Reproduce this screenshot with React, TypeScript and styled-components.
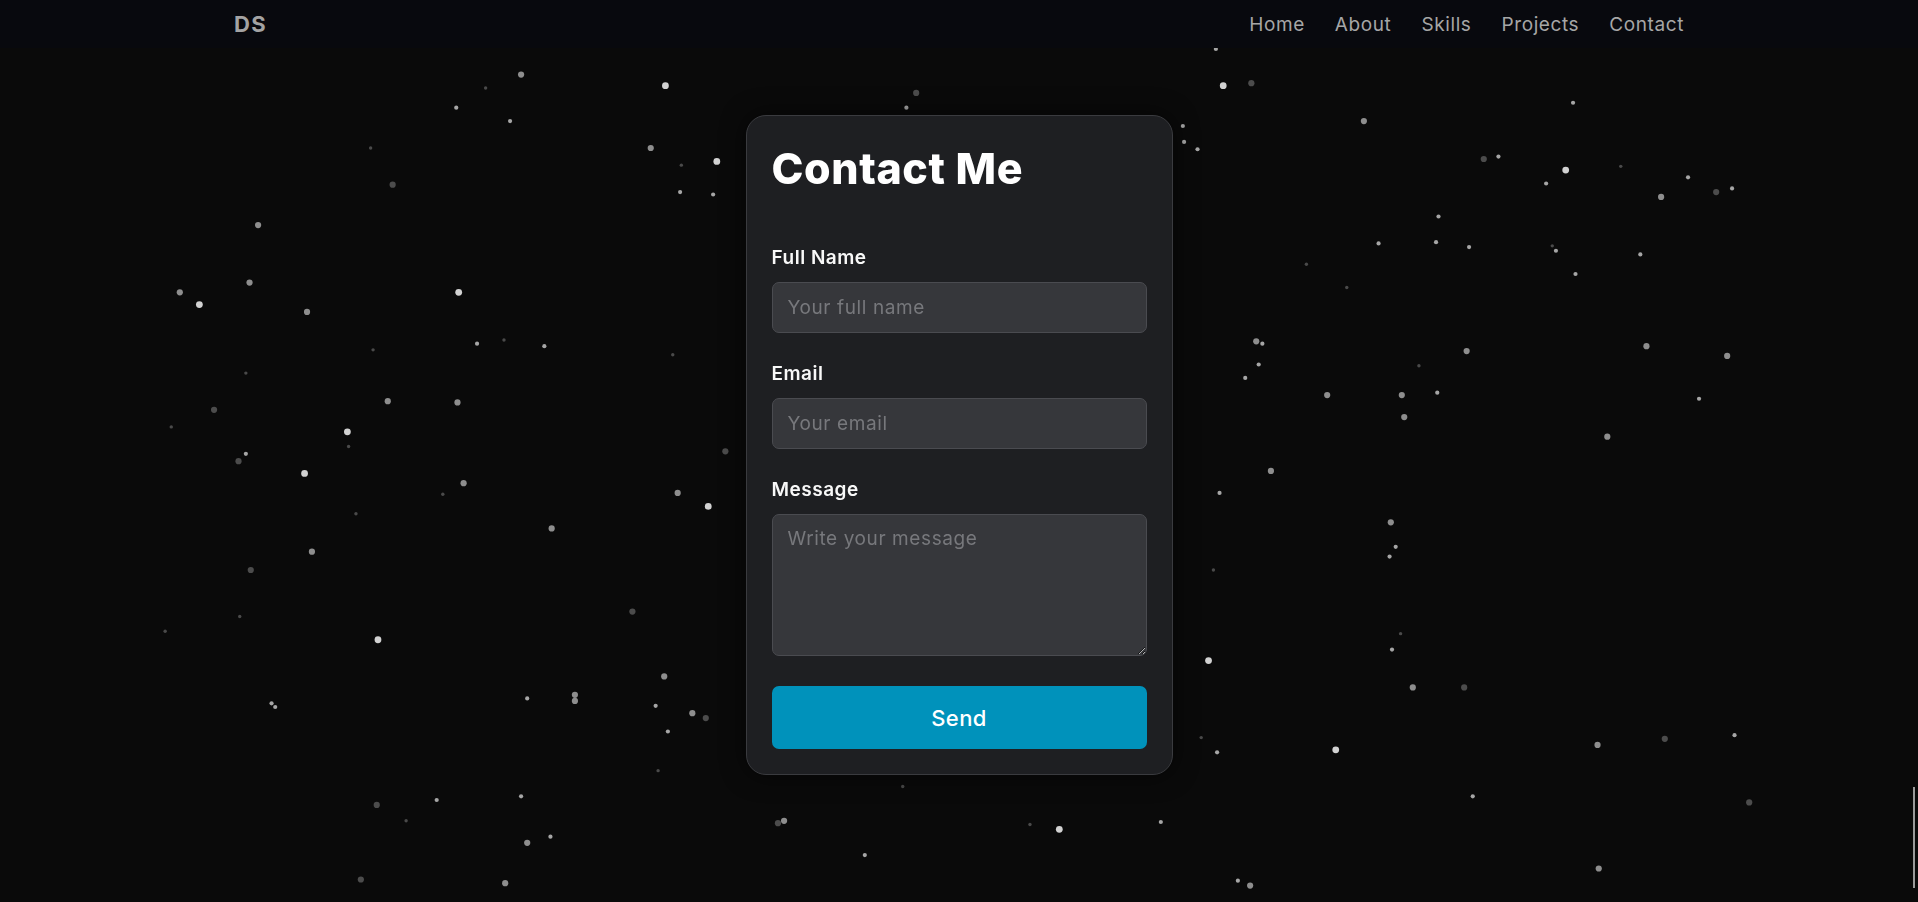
import React from "react";
import styled, { createGlobalStyle } from "styled-components";

const GlobalStyle = createGlobalStyle`
  * { box-sizing: border-box; }
  html, body { margin: 0; padding: 0; background: #0a0a0a; }
  body {
    font-family: "Inter", "Noto Sans", "Liberation Sans", sans-serif;
    color: #f5f5f5;
    overflow: hidden;
  }
`;

type StarKind = "b" | "m" | "d" | "s" | "t";
const STARS: [number, number, StarKind][] = [
  [426, 61, "m"], [544, 70, "b"], [397, 72, "t"], [373, 88, "s"], [417, 99, "s"], [303, 121, "t"],
  [321, 151, "d"], [532, 121, "m"], [557, 135, "t"], [586, 132, "b"], [556, 157, "s"], [583, 159, "s"],
  [211, 184, "m"], [147, 239, "m"], [163, 249, "b"], [204, 231, "m"], [375, 239, "b"], [251, 255, "m"],
  [390, 281, "s"], [412, 278, "t"], [445, 283, "s"], [305, 286, "t"], [550, 290, "t"], [201, 305, "t"],
  [175, 335, "d"], [317, 328, "m"], [374, 329, "m"], [140, 349, "t"], [284, 353, "b"], [285, 365, "t"],
  [201, 371, "s"], [195, 377, "d"], [249, 387, "b"], [379, 395, "m"], [362, 404, "t"], [593, 369, "d"],
  [554, 403, "m"], [579, 414, "b"], [291, 420, "t"], [451, 432, "m"], [255, 451, "m"], [205, 466, "d"],
  [517, 500, "d"], [196, 504, "t"], [135, 516, "t"], [309, 523, "b"], [543, 553, "m"], [470, 568, "m"],
  [470, 573, "m"], [431, 571, "s"], [536, 577, "s"], [222, 575, "s"], [225, 578, "s"], [566, 583, "m"],
  [577, 587, "d"], [546, 598, "s"], [538, 630, "t"], [426, 651, "s"], [357, 654, "s"], [308, 658, "d"],
  [332, 671, "t"], [738, 643, "t"], [641, 671, "m"], [636, 673, "d"], [450, 684, "s"], [431, 689, "m"],
  [707, 699, "s"], [295, 719, "d"], [413, 722, "m"],
  [749, 76, "d"], [741, 88, "s"], [994, 40, "s"], [1000, 70, "b"], [1023, 68, "d"], [1115, 99, "m"],
  [1286, 84, "s"], [967, 103, "s"], [968, 116, "s"], [979, 122, "s"], [1213, 130, "d"], [1225, 128, "s"],
  [1280, 139, "b"], [1325, 136, "t"], [1264, 150, "s"], [1358, 161, "m"], [1380, 145, "s"], [1403, 157, "d"],
  [1416, 154, "s"], [1176, 177, "s"], [1127, 199, "s"], [1174, 198, "s"], [1201, 202, "s"], [1269, 201, "t"],
  [1272, 205, "s"], [1341, 208, "s"], [1068, 216, "t"], [1288, 224, "s"], [1101, 235, "t"], [1027, 279, "m"],
  [1032, 281, "s"], [1199, 287, "m"], [1346, 283, "m"], [1412, 291, "m"], [1029, 298, "s"], [1160, 299, "t"],
  [1018, 309, "s"], [1085, 323, "m"], [1146, 323, "m"], [1175, 321, "s"], [1389, 326, "s"], [1148, 341, "m"],
  [1314, 357, "m"], [1039, 385, "m"], [997, 403, "s"], [1137, 427, "m"], [1141, 447, "s"], [1136, 455, "s"],
  [992, 466, "t"], [1145, 518, "t"], [1138, 531, "s"], [988, 540, "b"], [1155, 562, "m"], [1197, 562, "d"],
  [982, 603, "t"], [995, 615, "s"], [1092, 613, "b"], [1306, 609, "m"], [1361, 604, "d"], [1418, 601, "s"],
  [1204, 651, "s"], [1430, 656, "d"], [949, 672, "s"], [866, 678, "b"], [842, 674, "t"], [1012, 720, "s"],
  [1022, 724, "m"], [1307, 710, "m"],
];

const STAR_STYLE: Record<StarKind, { r: number; fill: string }> = {
  b: { r: 3.4, fill: "#d2d2d2" },
  m: { r: 3.1, fill: "#8e8e8e" },
  d: { r: 3.1, fill: "#4c4c4c" },
  s: { r: 2.1, fill: "#a6a6a6" },
  t: { r: 1.7, fill: "#4a4a4a" },
};

const SCALE = 1918 / 1568;

const StarField = styled.svg`
  position: fixed;
  inset: 0;
  width: 100vw;
  height: 100vh;
  z-index: 0;
  pointer-events: none;
`;

const Page = styled.div`
  position: relative;
  min-height: 100vh;
`;

const NavBar = styled.header`
  position: fixed;
  top: 0;
  left: 0;
  right: 0;
  height: 48px;
  background: #08090e;
  z-index: 10;
`;

const NavInner = styled.nav`
  max-width: 1450px;
  height: 100%;
  margin: 0 auto;
  display: flex;
  align-items: center;
  justify-content: space-between;
`;

const Logo = styled.div`
  font-size: 22px;
  font-weight: 700;
  color: #a3a3a3;
  letter-spacing: 1.4px;
`;

const NavLinks = styled.ul`
  list-style: none;
  margin: 0;
  padding: 0;
  display: flex;
  gap: 30px;
`;

const NavLink = styled.li`
  font-size: 19px;
  font-weight: 400;
  color: #a6a6a6;
  letter-spacing: 0.6px;
`;

const Main = styled.main`
  position: relative;
  z-index: 1;
  display: flex;
  justify-content: center;
  padding-top: 115px;
`;

const Card = styled.section`
  width: 427px;
  background: #1e1f22;
  border: 1px solid #3a3b3f;
  border-radius: 20px;
  padding: 26px 25px 25px;
  display: flex;
  flex-direction: column;
  box-shadow: 0 0 24px rgba(0, 0, 0, 0.6);
`;

const Title = styled.h2`
  margin: 0 0 53px;
  font-size: 43px;
  line-height: 52px;
  font-weight: 800;
  color: #ffffff;
  letter-spacing: 0.6px;
`;

const Form = styled.form`
  display: flex;
  flex-direction: column;
  gap: 30px;
`;

const Field = styled.div`
  display: flex;
  flex-direction: column;
  gap: 13px;
`;

const Label = styled.label`
  font-size: 19px;
  line-height: 22px;
  font-weight: 600;
  color: #f8f8f8;
  letter-spacing: 0.5px;
`;

const inputBase = `
  width: 100%;
  background: #36373b;
  border: 1px solid #4a4b50;
  border-radius: 7px;
  color: #f0f0f0;
  font-family: "Inter", "Noto Sans", "Liberation Sans", sans-serif;
  font-size: 19px;
  letter-spacing: 0.6px;
  padding: 0 15px;
  outline: none;
  &::placeholder { color: #77787c; }
`;

const Input = styled.input`
  ${inputBase}
  height: 51px;
`;

const TextArea = styled.textarea`
  ${inputBase}
  height: 142px;
  padding-top: 11px;
  line-height: 26px;
  resize: vertical;
  display: block;
`;

const SendButton = styled.button`
  height: 63px;
  border: none;
  border-radius: 7px;
  background: #0092bb;
  color: #ffffff;
  font-family: "Inter", "Noto Sans", "Liberation Sans", sans-serif;
  font-size: 22px;
  font-weight: 500;
  letter-spacing: 0.4px;
  cursor: pointer;
`;

const ScrollThumb = styled.div`
  position: fixed;
  right: 3px;
  top: 787px;
  width: 2px;
  height: 101px;
  background: #9a9a9a;
  z-index: 20;
`;

export default function App() {
  return (
    <Page>
      <GlobalStyle />
      <StarField viewBox="0 0 1918 902" preserveAspectRatio="none">
        {STARS.map(([x, y, k], i) => (
          <circle key={i} cx={x * SCALE} cy={y * SCALE} r={STAR_STYLE[k].r} fill={STAR_STYLE[k].fill} />
        ))}
      </StarField>
      <NavBar>
        <NavInner>
          <Logo>DS</Logo>
          <NavLinks>
            <NavLink>Home</NavLink>
            <NavLink>About</NavLink>
            <NavLink>Skills</NavLink>
            <NavLink>Projects</NavLink>
            <NavLink>Contact</NavLink>
          </NavLinks>
        </NavInner>
      </NavBar>
      <Main>
        <Card>
          <Title>Contact Me</Title>
          <Form onSubmit={(e) => e.preventDefault()}>
            <Field>
              <Label htmlFor="name">Full Name</Label>
              <Input id="name" placeholder="Your full name" />
            </Field>
            <Field>
              <Label htmlFor="email">Email</Label>
              <Input id="email" type="email" placeholder="Your email" />
            </Field>
            <Field>
              <Label htmlFor="msg">Message</Label>
              <TextArea id="msg" placeholder="Write your message" />
            </Field>
            <SendButton type="submit">Send</SendButton>
          </Form>
        </Card>
      </Main>
      <ScrollThumb />
    </Page>
  );
}
